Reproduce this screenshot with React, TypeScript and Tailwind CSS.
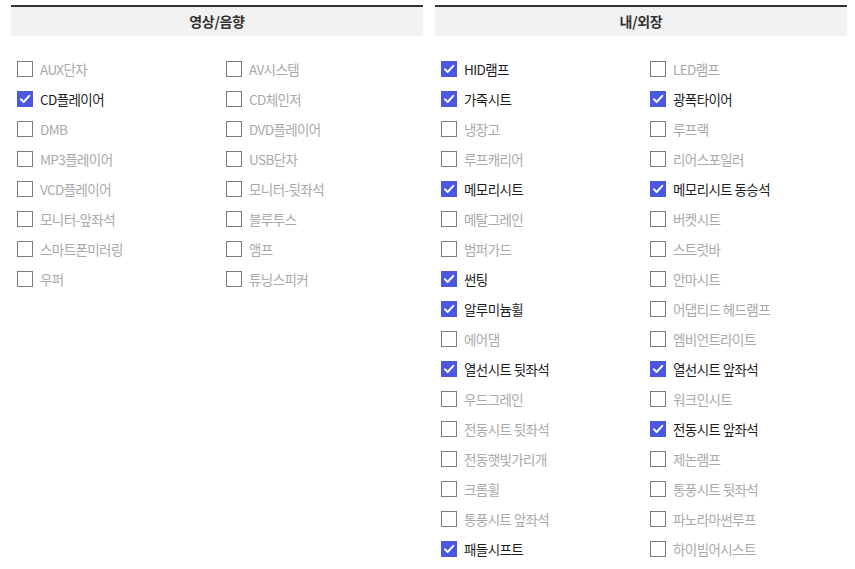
import React from "react";

type Item = { label: string; checked?: boolean };

const audio: Item[] = [
  { label: "AUX단자" },
  { label: "AV시스템" },
  { label: "CD플레이어", checked: true },
  { label: "CD체인저" },
  { label: "DMB" },
  { label: "DVD플레이어" },
  { label: "MP3플레이어" },
  { label: "USB단자" },
  { label: "VCD플레이어" },
  { label: "모니터-뒷좌석" },
  { label: "모니터-앞좌석" },
  { label: "블루투스" },
  { label: "스마트폰미러링" },
  { label: "앰프" },
  { label: "우퍼" },
  { label: "튜닝스피커" },
];

const exterior: Item[] = [
  { label: "HID램프", checked: true },
  { label: "LED램프" },
  { label: "가죽시트", checked: true },
  { label: "광폭타이어", checked: true },
  { label: "냉장고" },
  { label: "루프랙" },
  { label: "루프캐리어" },
  { label: "리어스포일러" },
  { label: "메모리시트", checked: true },
  { label: "메모리시트 동승석", checked: true },
  { label: "메탈그레인" },
  { label: "버켓시트" },
  { label: "범퍼가드" },
  { label: "스트럿바" },
  { label: "썬팅", checked: true },
  { label: "안마시트" },
  { label: "알루미늄휠", checked: true },
  { label: "어댑티드 헤드램프" },
  { label: "에어댐" },
  { label: "엠비언트라이트" },
  { label: "열선시트 뒷좌석", checked: true },
  { label: "열선시트 앞좌석", checked: true },
  { label: "우드그레인" },
  { label: "워크인시트" },
  { label: "전동시트 뒷좌석" },
  { label: "전동시트 앞좌석", checked: true },
  { label: "전동햇빛가리개" },
  { label: "제논램프" },
  { label: "크롬휠" },
  { label: "통풍시트 뒷좌석" },
  { label: "통풍시트 앞좌석" },
  { label: "파노라마썬루프" },
  { label: "패들시프트", checked: true },
  { label: "하이빔어시스트" },
];

const Option: React.FC<{ item: Item }> = ({ item }) => (
  <div className="flex h-[30px] items-center gap-[7px]">
    {item.checked ? (
      <span className="flex h-[16px] w-[16px] items-center justify-center bg-[#4a58e0]">
        <svg width="12" height="12" viewBox="0 0 12 12" fill="none">
          <path d="M1.8 6.2 L4.6 9 L10.3 2.8" stroke="#fff" strokeWidth="1.9" strokeLinecap="round" strokeLinejoin="round" />
        </svg>
      </span>
    ) : (
      <span className="h-[16px] w-[16px] border border-[#7a7a7a] bg-white" />
    )}
    <span className={`text-[13.5px] tracking-[-0.6px] ${item.checked ? "text-[#1e1e1e]" : "text-[#a9a9a9]"}`}>
      {item.label}
    </span>
  </div>
);

const Panel: React.FC<{ title: string; items: Item[] }> = ({ title, items }) => (
  <section className="w-[412px]">
    <div className="flex h-[31px] items-center justify-center border-t-2 border-[#333] bg-[#f2f2f2] text-[14px] font-bold tracking-[-0.3px] text-[#333]">
      {title}
    </div>
    <div className="grid grid-cols-[209px_1fr] pt-[18px] pl-[6px]">
      {items.map((item) => (
        <Option key={item.label} item={item} />
      ))}
    </div>
  </section>
);

export default function App() {
  return (
    <div
      className="flex h-[569px] w-[855px] gap-[12px] bg-white pl-[11px] pt-[5px]"
      style={{ fontFamily: '"Noto Sans CJK KR", "Noto Sans", sans-serif' }}
    >
      <Panel title="영상/음향" items={audio} />
      <Panel title="내/외장" items={exterior} />
    </div>
  );
}
